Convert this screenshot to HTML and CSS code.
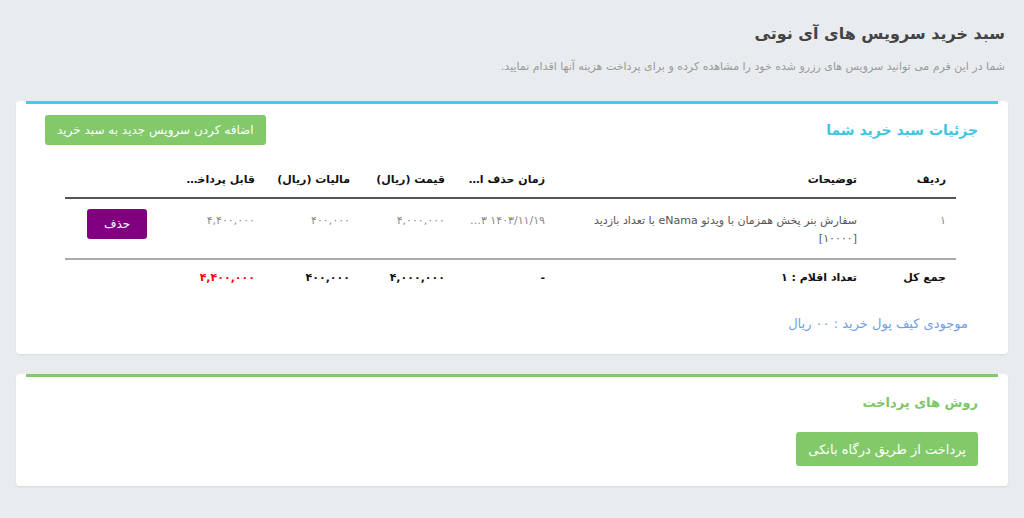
FILE: index.html
```html
<!DOCTYPE html>
<html lang="fa" dir="rtl">
<head>
    <meta charset="UTF-8">
    <meta name="viewport" content="width=device-width, initial-scale=1.0">
    <title>سبد خرید سرویس های آی نوتی</title>
    <link rel="stylesheet" href="styles.css">
</head>
<body>
    <div class="page">
        <h1 class="page-title">سبد خرید سرویس های آی نوتی</h1>
        <p class="page-desc">شما در این فرم می توانید سرویس های رزرو شده خود را مشاهده کرده و برای پرداخت هزینه آنها اقدام نمایید.</p>

        <!-- Cart card -->
        <section class="card">
            <div class="card-line line-info"></div>
            <div class="card-head">
                <h2 class="card-title title-info">جزئیات سبد خرید شما</h2>
                <button class="btn btn-green btn-add">اضافه کردن سرویس جدید به سبد خرید</button>
            </div>
            <div class="card-body">
                <table class="cart-table">
                    <colgroup>
                        <col style="width: 89px;">
                        <col style="width: 312px;">
                        <col style="width: 100px;">
                        <col style="width: 95px;">
                        <col style="width: 95px;">
                        <col style="width: 94px;">
                        <col>
                    </colgroup>
                    <thead>
                        <tr>
                            <th>ردیف</th>
                            <th>توضیحات</th>
                            <th>زمان حذف اتوماتیک</th>
                            <th>قیمت (ریال)</th>
                            <th>مالیات (ریال)</th>
                            <th>قابل پرداخت (ریال)</th>
                            <th></th>
                        </tr>
                    </thead>
                    <tbody>
                        <tr class="item-row">
                            <td>۱</td>
                            <td class="desc">سفارش بنر پخش همزمان با ویدئو eNama با تعداد بازدید [۱۰۰۰۰]</td>
                            <td class="cut">۱۴۰۳/۱۱/۱۹ ۱۰:۲۳</td>
                            <td class="num">۴,۰۰۰,۰۰۰</td>
                            <td class="num">۴۰۰,۰۰۰</td>
                            <td class="num">۴,۴۰۰,۰۰۰</td>
                            <td class="action"><button class="btn btn-purple">حذف</button></td>
                        </tr>
                        <tr class="total-row">
                            <td>جمع کل</td>
                            <td>تعداد اقلام : ۱</td>
                            <td>-</td>
                            <td class="num">۴,۰۰۰,۰۰۰</td>
                            <td class="num">۴۰۰,۰۰۰</td>
                            <td class="num red">۴,۴۰۰,۰۰۰</td>
                            <td></td>
                        </tr>
                    </tbody>
                </table>
                <p class="wallet">موجودی کیف پول خرید : ۰۰ ریال</p>
            </div>
        </section>

        <!-- Payment card -->
        <section class="card">
            <div class="card-line line-green"></div>
            <div class="card-head pay-head">
                <h2 class="card-title title-green">روش های پرداخت</h2>
            </div>
            <div class="pay-body">
                <button class="btn btn-green btn-pay">پرداخت از طریق درگاه بانکی</button>
            </div>
        </section>
    </div>
</body>
</html>
```

FILE: styles.css
```css
body {
    background-color: #e9ecef;
    font-family: "DejaVu Sans", sans-serif;
    direction: rtl;
    margin: 0;
    padding: 0;
}
.page {
    padding: 20px 16px 30px 16px;
}
.page-title {
    font-size: 16px;
    font-weight: bold;
    color: #444;
    margin: 0 3px 0 0;
    line-height: 28px;
}
.page-desc {
    font-size: 11px;
    color: #999;
    margin: 12px 3px 28px 0;
}
.card {
    background: #fff;
    border-radius: 4px;
    box-shadow: 0 1px 2px rgba(0, 0, 0, 0.08);
    margin-bottom: 20px;
}
.card-line {
    height: 3px;
    margin: 0 10px;
}
.line-info {
    background-color: #33d3e8;
}
.line-green {
    background-color: #82c96a;
}
.card-head {
    display: flex;
    justify-content: space-between;
    align-items: center;
    padding: 11px 30px 0 29px;
}
.pay-head {
    padding-top: 18px;
}
.card-title {
    font-size: 14px;
    font-weight: bold;
    margin: 0;
}
.title-info {
    color: #3cc6e0;
}
.title-green {
    color: #7cc664;
    font-size: 13px;
}
.btn {
    border: none;
    border-radius: 3px;
    color: #fff;
    font-family: "DejaVu Sans", sans-serif;
    cursor: pointer;
}
.btn-green {
    background-color: #82c96a;
}
.btn-add {
    font-size: 12px;
    padding: 8px 12px;
}
.btn-purple {
    background-color: #800080;
    font-size: 12px;
    padding: 8px 17px;
}
.card-body {
    padding: 18px 52px 23px 49px;
}
.cart-table {
    width: 100%;
    table-layout: fixed;
    border-collapse: collapse;
    font-size: 11px;
}
.cart-table th {
    text-align: right;
    font-weight: bold;
    color: #111;
    padding: 10px 10px 11px 10px;
    border-bottom: 2px solid #555;
    white-space: nowrap;
    overflow: hidden;
    text-overflow: ellipsis;
}
.cart-table td {
    padding: 10px;
    vertical-align: top;
    color: #888;
}
.cart-table .num {
    letter-spacing: 1px;
}
.item-row td {
    padding: 13px 10px 10px 10px;
    border-bottom: 2px solid #aaa;
    line-height: 18px;
}
.item-row .desc {
    color: #555;
}
.cut {
    white-space: nowrap;
    overflow: hidden;
    text-overflow: ellipsis;
}
.item-row .action {
    text-align: left;
    padding-left: 22px;
    padding-top: 10px;
}
.total-row td {
    font-weight: bold;
    color: #111;
    padding: 11px 10px;
}
.total-row .red {
    color: #ff0000;
}
.wallet {
    color: #6f9ef0;
    font-size: 13px;
    margin: 21px -12px 0 0;
}
.pay-body {
    padding: 22px 30px 20px 29px;
}
.btn-pay {
    font-size: 13px;
    padding: 10px 12px 9px 12px;
}
```
